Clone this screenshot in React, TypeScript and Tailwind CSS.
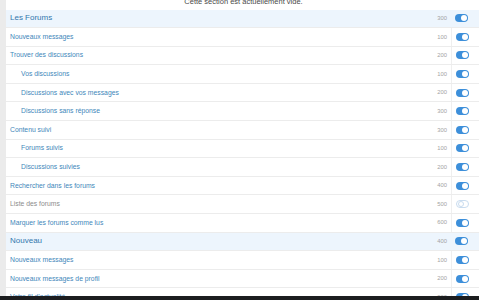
import React from 'react';

type Row = { label: string; order: number; header?: boolean; indent?: boolean; off?: boolean };

const rows: Row[] = [
  { label: 'Les Forums', order: 300, header: true },
  { label: 'Nouveaux messages', order: 100 },
  { label: 'Trouver des discussions', order: 200 },
  { label: 'Vos discussions', order: 100, indent: true },
  { label: 'Discussions avec vos messages', order: 200, indent: true },
  { label: 'Discussions sans réponse', order: 300, indent: true },
  { label: 'Contenu suivi', order: 300 },
  { label: 'Forums suivis', order: 100, indent: true },
  { label: 'Discussions suivies', order: 200, indent: true },
  { label: 'Rechercher dans les forums', order: 400 },
  { label: 'Liste des forums', order: 500, off: true },
  { label: 'Marquer les forums comme lus', order: 600 },
  { label: 'Nouveau', order: 400, header: true },
  { label: 'Nouveaux messages', order: 100 },
  { label: 'Nouveaux messages de profil', order: 200 },
  { label: 'Votre fil d’actualité', order: 300 },
];

const Toggle = ({ on }: { on: boolean }) =>
  on ? (
    <div className="w-[13px] h-[8px] rounded-full bg-[#3d8fda] flex items-center justify-end pr-[1px]">
      <div className="w-[6px] h-[6px] rounded-full bg-white" />
    </div>
  ) : (
    <div className="w-[13px] h-[8px] rounded-full bg-white border border-[#c9dcef] flex items-center pl-[0.5px]">
      <div className="w-[6px] h-[6px] rounded-full bg-white border border-[#c9dcef]" />
    </div>
  );

export default function App() {
  return (
    <div className="w-[479px] h-[300px] overflow-hidden flex flex-col bg-[#ebebeb] font-['Liberation_Sans',Arial,sans-serif]">
      <div className="flex flex-1 min-h-0">
        <div className="w-[6px] shrink-0" />
        <div className="flex-1 bg-white flex flex-col min-h-0 overflow-hidden">
          <div className="h-[9.5px] shrink-0 flex justify-center">
            <div className="text-[7.5px] leading-none text-[#4a4a4a] -mt-[2.5px] pl-[2px]">
              Cette section est actuellement vide.
            </div>
          </div>
          {rows.map((r, i) => (
            <div
              key={i}
              className={`h-[18.6px] shrink-0 flex items-stretch border-b border-[#ececec] ${r.header ? 'bg-[#edf5fd]' : ''}`}
            >
              <div
                className={`flex-1 flex items-center ${r.indent ? 'pl-[15px]' : 'pl-[4px]'} ${
                  r.header ? 'text-[8px] text-[#3277ad]' : r.off ? 'text-[6.8px] text-[#8c8c8c]' : 'text-[6.8px] text-[#4287ba]'
                }`}
              >
                {r.label}
              </div>
              <div className="flex items-center pr-[4px] text-[5.8px] text-[#a3a3a3]">{r.order}</div>
              <div
                className={`w-[28px] shrink-0 flex items-center pl-[4px] ${r.header ? '' : 'border-l border-[#efefef]'}`}
              >
                <Toggle on={!r.off} />
              </div>
            </div>
          ))}
        </div>
      </div>
      <div className="h-[4px] shrink-0 bg-[#1c1d1f]" />
    </div>
  );
}
